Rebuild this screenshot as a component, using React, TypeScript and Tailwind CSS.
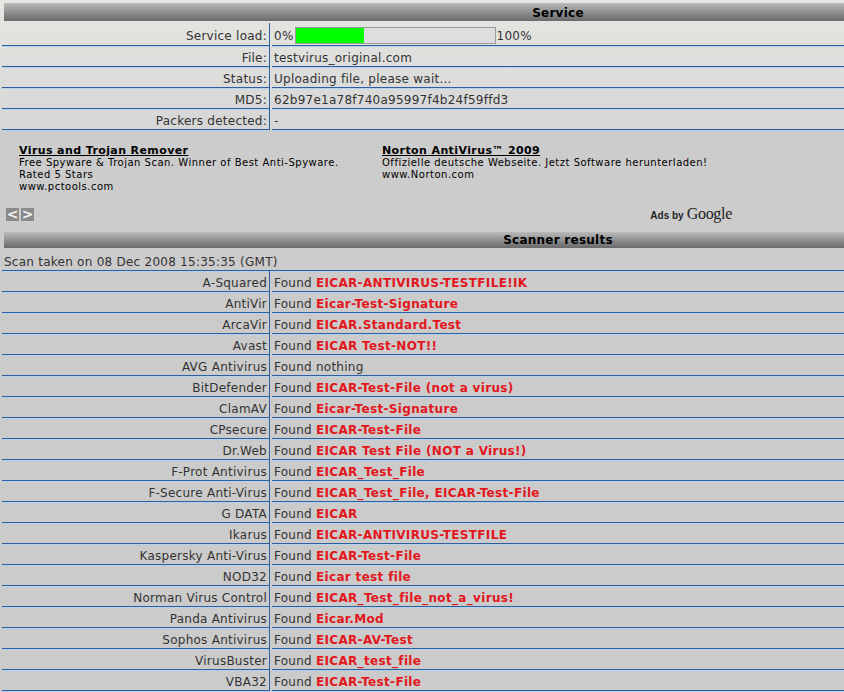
import React from "react";

const scanners: [string, string | null][] = [
  ["A-Squared", "EICAR-ANTIVIRUS-TESTFILE!IK"],
  ["AntiVir", "Eicar-Test-Signature"],
  ["ArcaVir", "EICAR.Standard.Test"],
  ["Avast", "EICAR Test-NOT!!"],
  ["AVG Antivirus", null],
  ["BitDefender", "EICAR-Test-File (not a virus)"],
  ["ClamAV", "Eicar-Test-Signature"],
  ["CPsecure", "EICAR-Test-File"],
  ["Dr.Web", "EICAR Test File (NOT a Virus!)"],
  ["F-Prot Antivirus", "EICAR_Test_File"],
  ["F-Secure Anti-Virus", "EICAR_Test_File, EICAR-Test-File"],
  ["G DATA", "EICAR"],
  ["Ikarus", "EICAR-ANTIVIRUS-TESTFILE"],
  ["Kaspersky Anti-Virus", "EICAR-Test-File"],
  ["NOD32", "Eicar test file"],
  ["Norman Virus Control", "EICAR_Test_file_not_a_virus!"],
  ["Panda Antivirus", "Eicar.Mod"],
  ["Sophos Antivirus", "EICAR-AV-Test"],
  ["VirusBuster", "EICAR_test_file"],
  ["VBA32", "EICAR-Test-File"],
];

function Row({
  label,
  children,
  tall,
}: {
  label: string;
  children: React.ReactNode;
  tall?: boolean;
}) {
  return (
    <div className={`flex gap-[2px] pl-[2px] ${tall ? "h-[25px] pt-[2px]" : "h-[21px]"}`}>
      <div className="w-[268px] shrink-0 border-r border-b border-[#2f5f9c] shadow-[0_1px_0_#b4d2ee] text-right pr-[2px] pt-[4px] flex items-center justify-end">
        {label}
      </div>
      <div className="flex-1 border-b border-[#2f5f9c] shadow-[0_1px_0_#b4d2ee] pl-[2px] pt-[4px] flex items-center whitespace-nowrap">
        {children}
      </div>
    </div>
  );
}

function Header({ title }: { title: string }) {
  return (
    <div className="ml-[4px] h-full flex bg-gradient-to-b from-[#bababa] to-[#6a6a6a] text-black font-bold">
      <div className="w-[268px] shrink-0" />
      <div className="flex-1 text-center">{title}</div>
    </div>
  );
}

export default function App() {
  return (
    <div className="w-[844px] h-[692px] overflow-hidden bg-[#cbcbcb] font-['DejaVu_Sans',sans-serif] text-[12px] tracking-[0.25px] text-[#333]">
      <div className="bg-gradient-to-b from-[#e6e6e2] to-[#d6d6d6] pt-[3px]">
        <div className="h-[18px] leading-[20px]">
          <Header title="Service" />
        </div>
        <Row label="Service load:" tall>
          <span>0%</span>
          <div className="w-[201px] h-[17px] border border-[#9a9a9a] bg-[#dedede] mx-[1px] mb-[2px]">
            <div className="h-full bg-[#00ff00]" style={{ width: "68px" }} />
          </div>
          <span>100%</span>
        </Row>
        <Row label="File:">testvirus_original.com</Row>
        <Row label="Status:">Uploading file, please wait...</Row>
        <Row label="MD5:">62b97e1a78f740a95997f4b24f59ffd3</Row>
        <Row label="Packers detected:">-</Row>
      </div>

      <div className="h-[102px] bg-[#cccccc] pt-[15px] text-black">
        <div className="flex pl-[19px] text-[10px] leading-[12px] tracking-[0.5px] h-[48px]">
          <div className="w-[363px] shrink-0">
            <div className="font-bold underline text-[11px] tracking-[0.4px]">Virus and Trojan Remover</div>
            <div>Free Spyware &amp; Trojan Scan. Winner of Best Anti-Spyware.</div>
            <div>Rated 5 Stars</div>
            <div>www.pctools.com</div>
          </div>
          <div className="w-[420px] shrink-0">
            <div className="font-bold underline text-[11px] tracking-[0.4px]">Norton AntiVirus™ 2009</div>
            <div>Offizielle deutsche Webseite. Jetzt Software herunterladen!</div>
            <div>www.Norton.com</div>
          </div>
        </div>
        <div className="mt-[9px] ml-[6px] w-[726px] flex items-center justify-between tracking-normal">
          <div className="flex gap-[2px]">
            <div className="w-[13px] h-[13px] bg-[#8a8a8a] text-[#f4f4f4] font-bold text-[14px] leading-[13px] flex items-center justify-center">&lt;</div>
            <div className="w-[13px] h-[13px] bg-[#8a8a8a] text-[#f4f4f4] font-bold text-[14px] leading-[13px] flex items-center justify-center">&gt;</div>
          </div>
          <div className="flex items-baseline gap-[3px] text-[#222]">
            <span className="font-['Liberation_Sans',sans-serif] text-[10px] font-bold">Ads by</span>
            <span className="font-['Liberation_Serif',serif] text-[16px] tracking-[-0.3px]">Google</span>
          </div>
        </div>
      </div>

      <div className="h-[16px] leading-[17px]">
        <Header title="Scanner results" />
      </div>
      <div className="h-[23px] pl-[2px]">
        <div className="h-full border-b border-[#2f5f9c] shadow-[0_1px_0_#b4d2ee] pl-[2px] pt-[5px] flex items-center">
          Scan taken on 08 Dec 2008 15:35:35 (GMT)
        </div>
      </div>
      {scanners.map(([name, res]) => (
        <Row key={name} label={name}>
          <span>Found&nbsp;</span>
          {res ? (
            <span className="font-bold text-[#e3161c] tracking-[0.33px]">{res}</span>
          ) : (
            <span>nothing</span>
          )}
        </Row>
      ))}
    </div>
  );
}
